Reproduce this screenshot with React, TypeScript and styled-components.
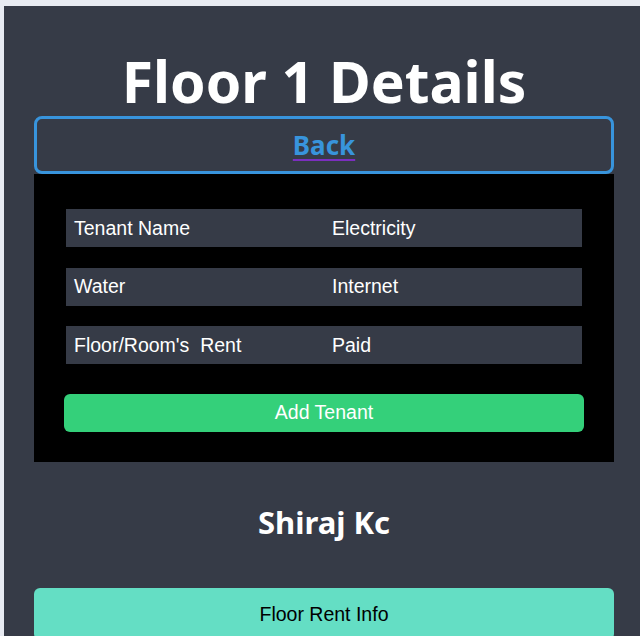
import React from "react";
import styled, { createGlobalStyle } from "styled-components";

const Global = createGlobalStyle`
  html, body { margin: 0; padding: 0; background: #e8ebf2; }
  body { padding: 6px 0 0 4px; overflow: hidden; }
`;

const Page = styled.div`
  background: #363b47;
  min-height: 630px;
  padding: 0 26px 0 30px;
  display: flex;
  flex-direction: column;
  align-items: stretch;
`;

const Title = styled.h1`
  margin: 40px 0 0;
  font-family: "Noto Sans", "Open Sans", sans-serif;
  font-weight: 700;
  font-size: 57px;
  line-height: 70px;
  color: #ffffff;
  text-align: center;
`;

const BackButton = styled.div`
  height: 52px;
  border: 3px solid #3894dc;
  border-radius: 8px;
  display: flex;
  align-items: center;
  justify-content: center;
`;

const BackLink = styled.a`
  font-family: "Noto Sans", "Open Sans", sans-serif;
  font-weight: 700;
  font-size: 26px;
  color: #3894dc;
  text-decoration: underline;
  text-decoration-color: #7b2fbf;
  text-underline-offset: 4px;
  cursor: pointer;
`;

const Panel = styled.div`
  background: #000000;
  padding: 35px 32px 30px;
  display: flex;
  flex-direction: column;
`;

const Row = styled.div`
  background: #363b47;
  height: 38px;
  margin-bottom: 20.5px;
  display: grid;
  grid-template-columns: 1fr 1fr;
  align-items: center;
`;

const Cell = styled.div`
  font-family: "Liberation Sans", Arial, sans-serif;
  font-size: 19.5px;
  color: #ffffff;
  padding-left: 8px;
  white-space: pre;
`;

const AddButton = styled.button`
  margin: 9px -2px 0;
  height: 38px;
  border: none;
  border-radius: 6px;
  background: #34d07a;
  color: #ffffff;
  font-family: "Liberation Sans", Arial, sans-serif;
  font-size: 19.5px;
`;

const Name = styled.h2`
  margin: 38px 0 0;
  font-family: "Noto Sans", "Open Sans", sans-serif;
  font-weight: 700;
  font-size: 31px;
  line-height: 44px;
  color: #ffffff;
  text-align: center;
`;

const RentButton = styled.button`
  margin-top: 44px;
  height: 52px;
  border: none;
  border-radius: 6px;
  background: #64dec4;
  color: #000000;
  font-family: "Liberation Sans", Arial, sans-serif;
  font-size: 19.5px;
  padding-bottom: 0;
`;

const rows: [string, string][] = [
  ["Tenant Name", "Electricity"],
  ["Water", "Internet"],
  ["Floor/Room's  Rent", "Paid"],
];

export default function App() {
  return (
    <>
      <Global />
      <Page>
        <Title>Floor 1 Details</Title>
        <BackButton>
          <BackLink>Back</BackLink>
        </BackButton>
        <Panel>
          {rows.map(([a, b]) => (
            <Row key={a}>
              <Cell>{a}</Cell>
              <Cell>{b}</Cell>
            </Row>
          ))}
          <AddButton>Add Tenant</AddButton>
        </Panel>
        <Name>Shiraj Kc</Name>
        <RentButton>Floor Rent Info</RentButton>
      </Page>
    </>
  );
}
